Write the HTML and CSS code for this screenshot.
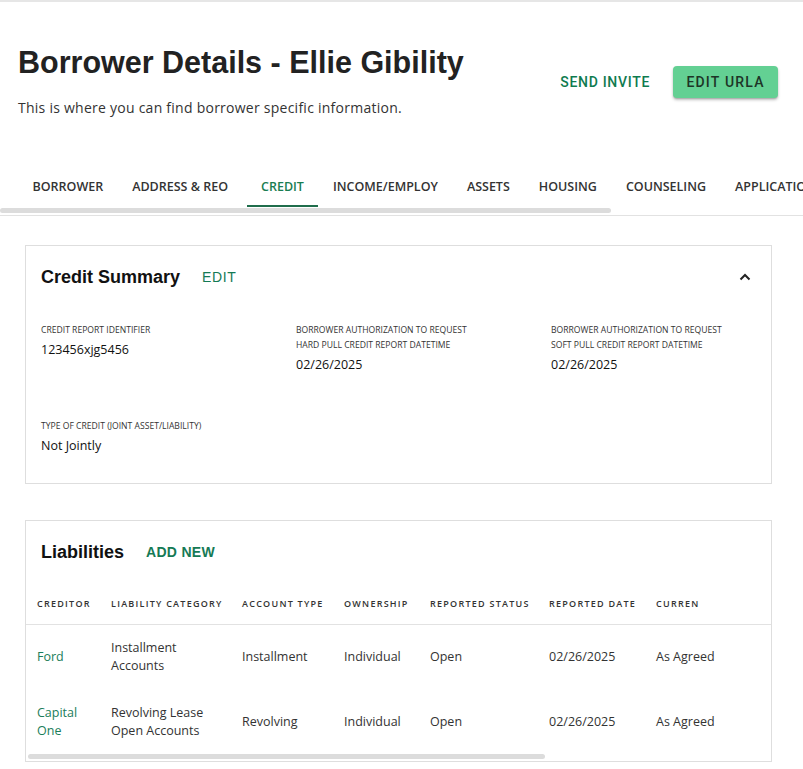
FILE: index.html
```html
<!DOCTYPE html>
<html lang="en">
<head>
<meta charset="utf-8">
<title>Borrower Details</title>
<link rel="stylesheet" href="styles.css">
</head>
<body>
<div class="page">
  <header class="header">
    <div class="header-text">
      <h1 class="title">Borrower Details - Ellie Gibility</h1>
      <p class="subtitle">This is where you can find borrower specific information.</p>
    </div>
    <div class="header-actions">
      <button class="btn-text">SEND INVITE</button>
      <button class="btn-primary">EDIT URLA</button>
    </div>
  </header>

  <nav class="tabs-wrap">
    <div class="tabs">
      <div class="tab">BORROWER</div>
      <div class="tab">ADDRESS &amp; REO</div>
      <div class="tab active">CREDIT</div>
      <div class="tab">INCOME/EMPLOY</div>
      <div class="tab">ASSETS</div>
      <div class="tab">HOUSING</div>
      <div class="tab">COUNSELING</div>
      <div class="tab">APPLICATION</div>
    </div>
    <div class="tabs-scroll"></div>
  </nav>

  <main class="content">
    <section class="card summary">
      <div class="card-head">
        <h2 class="card-title">Credit Summary</h2>
        <span class="card-link">EDIT</span>
        <svg class="chevron" width="12" height="8" viewBox="0 0 12 8"><polyline points="1.5,6.5 6,2 10.5,6.5" fill="none" stroke="#222" stroke-width="2"/></svg>
      </div>
      <div class="fields">
        <div class="field">
          <div class="label">CREDIT REPORT IDENTIFIER</div>
          <div class="value">123456xjg5456</div>
        </div>
        <div class="field">
          <div class="label">BORROWER AUTHORIZATION TO REQUEST<br>HARD PULL CREDIT REPORT DATETIME</div>
          <div class="value">02/26/2025</div>
        </div>
        <div class="field">
          <div class="label">BORROWER AUTHORIZATION TO REQUEST<br>SOFT PULL CREDIT REPORT DATETIME</div>
          <div class="value">02/26/2025</div>
        </div>
        <div class="field">
          <div class="label">TYPE OF CREDIT (JOINT ASSET/LIABILITY)</div>
          <div class="value">Not Jointly</div>
        </div>
      </div>
    </section>

    <section class="card liabilities">
      <div class="card-head">
        <h2 class="card-title">Liabilities</h2>
        <span class="card-link bold">ADD NEW</span>
      </div>
      <div class="table-wrap">
        <table class="table">
          <thead>
            <tr>
              <th class="c1">CREDITOR</th>
              <th class="c2">LIABILITY CATEGORY</th>
              <th class="c3">ACCOUNT TYPE</th>
              <th class="c4">OWNERSHIP</th>
              <th class="c5">REPORTED STATUS</th>
              <th class="c6">REPORTED DATE</th>
              <th class="c7"><div class="clip">CURRENT STATUS</div></th>
            </tr>
          </thead>
          <tbody>
            <tr>
              <td class="creditor">Ford</td>
              <td>Installment<br>Accounts</td>
              <td>Installment</td>
              <td>Individual</td>
              <td>Open</td>
              <td>02/26/2025</td>
              <td>As Agreed</td>
            </tr>
            <tr>
              <td class="creditor">Capital<br>One</td>
              <td>Revolving Lease<br>Open Accounts</td>
              <td>Revolving</td>
              <td>Individual</td>
              <td>Open</td>
              <td>02/26/2025</td>
              <td>As Agreed</td>
            </tr>
          </tbody>
        </table>
        <div class="table-scroll"></div>
      </div>
    </section>
  </main>
</div>
</body>
</html>
```

FILE: styles.css
```css
* { box-sizing: border-box; }

html, body {
  margin: 0;
  padding: 0;
  background: #fff;
}

body {
  font-family: "Open Sans", "Noto Sans", sans-serif;
  color: #222;
  overflow: hidden;
}

.page {
  border-top: 2px solid #e6e6e6;
  width: 803px;
}

.header {
  display: flex;
  justify-content: space-between;
  align-items: flex-start;
  padding: 0 25px 0 18px;
}

.title {
  font-family: "Liberation Sans", Arial, sans-serif;
  font-weight: bold;
  font-size: 30.5px;
  line-height: 38px;
  margin: 41px 0 0 0;
  color: #222;
}

.subtitle {
  margin: 17px 0 0 0;
  font-size: 14px;
  line-height: 20px;
  color: #333;
  letter-spacing: 0.25px;
}

.header-actions {
  display: flex;
  align-items: center;
  gap: 15px;
  margin-top: 64px;
}

.btn-text {
  font-family: Roboto, sans-serif;
  font-weight: 500;
  font-size: 14px;
  letter-spacing: 0.7px;
  color: #0f7b4f;
  background: none;
  border: none;
  padding: 8px 8px;
  height: 32px;
}

.btn-primary {
  font-family: Roboto, sans-serif;
  font-weight: 500;
  font-size: 14px;
  letter-spacing: 1.2px;
  color: #1d3527;
  background: #63d093;
  border: none;
  border-radius: 4px;
  height: 32px;
  width: 105px;
  padding: 0;
  box-shadow: 0 2px 3px rgba(0,0,0,0.25), 0 1px 1px rgba(0,0,0,0.12);
}

.tabs-wrap {
  margin-top: 49px;
  border-bottom: 1px solid #e2e2e2;
  padding-bottom: 2px;
  overflow: hidden;
}

.tabs {
  display: flex;
  padding-left: 18px;
  white-space: nowrap;
}

.tab {
  flex: none;
  padding: 0 14.5px;
  height: 40px;
  line-height: 40px;
  font-size: 12.5px;
  font-weight: 600;
  color: #333;
  border-bottom: 2px solid transparent;
}

.tab.active {
  margin-left: 4px;
  color: #1a7d52;
  border-bottom-color: #1f6d4b;
}

.tabs-scroll {
  margin-top: 1px;
  width: 611px;
  height: 5px;
  border-radius: 3px;
  background: #dcdcdc;
}

.content {
  padding: 29px 31px 0 25px;
  display: flex;
  flex-direction: column;
  gap: 36px;
}

.card {
  border: 1px solid #dedede;
  background: #fff;
}

.card-head {
  display: flex;
  align-items: center;
  padding: 0 15px;
  height: 62px;
}

.card-title {
  font-family: "Liberation Sans", Arial, sans-serif;
  font-weight: bold;
  font-size: 18px;
  margin: 0;
  color: #111;
}

.card-link {
  font-family: "Liberation Sans", Arial, sans-serif;
  font-size: 14px;
  letter-spacing: 0.6px;
  color: #157a55;
  margin-left: 22px;
}

.card-link.bold {
  font-weight: bold;
  letter-spacing: 0.3px;
}

.chevron {
  margin-left: auto;
  margin-right: 5px;
}

.fields {
  display: grid;
  grid-template-columns: 255px 255px 1fr;
  row-gap: 44px;
  padding: 15px 15px 27px 15px;
}

.label {
  font-size: 8.6px;
  line-height: 15px;
  color: #333;
}

.value {
  font-size: 12.5px;
  line-height: 20px;
  margin-top: 2px;
  color: #111;
}

.field:nth-child(4) {
  grid-column: 1 / 2;
}

.table-wrap {
  overflow: hidden;
  padding-bottom: 2px;
}

.table {
  border-collapse: collapse;
  width: 100%;
}

.table th {
  text-align: left;
  font-size: 9px;
  font-weight: 600;
  letter-spacing: 1.25px;
  color: #333;
  padding: 0 0 0 11px;
  height: 41px;
  border-bottom: 1px solid #e2e2e2;
  white-space: nowrap;
}

.c1 { width: 74px; }
.c2 { width: 131px; }
.c3 { width: 102px; }
.c4 { width: 86px; }
.c5 { width: 119px; }
.c6 { width: 107px; }

.clip {
  width: 43px;
  overflow: hidden;
}

.table td {
  font-size: 12.5px;
  line-height: 18px;
  color: #333;
  padding: 0 0 0 11px;
  height: 65px;
  vertical-align: middle;
}

.table td.creditor {
  color: #1a7d5a;
}

.table-scroll {
  margin: 0 0 0 2px;
  width: 517px;
  height: 5px;
  border-radius: 3px;
  background: #dcdcdc;
}
```
